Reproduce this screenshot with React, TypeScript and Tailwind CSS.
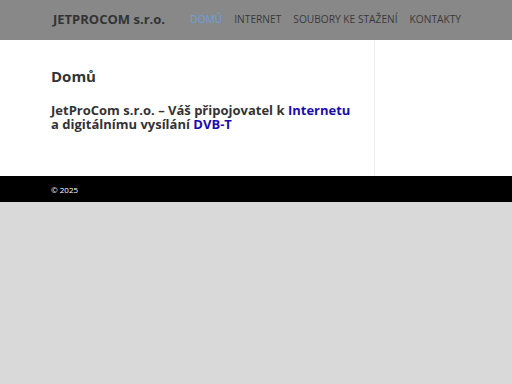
export default function App() {
  return (
    <div className="min-h-[384px] bg-[#d9d9d9]" style={{ fontFamily: '"Open Sans", sans-serif' }}>
      <header className="h-[40px] bg-[#888888]">
        <div className="flex h-full items-center justify-between whitespace-nowrap pl-[53px] pr-[51px]">
          <div className="text-[13px] font-bold text-[#333333]">JETPROCOM s.r.o.</div>
          <nav className="flex gap-[12px] text-[10.2px] text-[#3a3a3a]">
            <span className="text-[#6c9fd9]">DOMŮ</span>
            <span>INTERNET</span>
            <span>SOUBORY KE STAŽENÍ</span>
            <span>KONTAKTY</span>
          </nav>
        </div>
      </header>
      <main className="flex h-[136px] bg-white">
        <div className="w-[375px] shrink-0 border-r border-[#eeeeee] pl-[51px] pt-[25px]">
          <h1 className="text-[15px] font-bold leading-[22px] text-[#333333]">Domů</h1>
          <h2 className="mt-[16px] whitespace-nowrap text-[13px] font-bold leading-[14px] text-[#333333]">
            JetProCom s.r.o. – Váš připojovatel k <span className="text-[#1a0dab]">Internetu</span>
            <br />a digitálnímu vysílání <span className="text-[#1a0dab]">DVB-T</span>
          </h2>
        </div>
        <div className="flex-1" />
      </main>
      <footer className="flex h-[26px] items-center bg-black pl-[51px] pt-[2px]">
        <span className="text-[8px] text-white">© 2025</span>
      </footer>
    </div>
  );
}
